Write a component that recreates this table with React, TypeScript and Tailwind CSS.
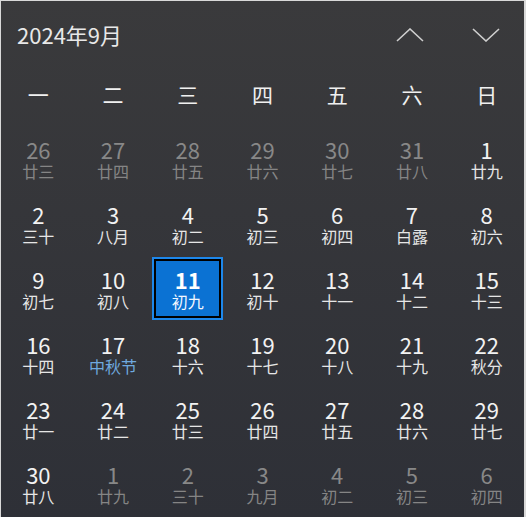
import React from 'react';

type Day = { n: number; lunar: string; other?: boolean; festival?: boolean };

const weekdays = ['一', '二', '三', '四', '五', '六', '日'];

const rows: Day[][] = [
  [
    { n: 26, lunar: '廿三', other: true },
    { n: 27, lunar: '廿四', other: true },
    { n: 28, lunar: '廿五', other: true },
    { n: 29, lunar: '廿六', other: true },
    { n: 30, lunar: '廿七', other: true },
    { n: 31, lunar: '廿八', other: true },
    { n: 1, lunar: '廿九' },
  ],
  [
    { n: 2, lunar: '三十' },
    { n: 3, lunar: '八月' },
    { n: 4, lunar: '初二' },
    { n: 5, lunar: '初三' },
    { n: 6, lunar: '初四' },
    { n: 7, lunar: '白露' },
    { n: 8, lunar: '初六' },
  ],
  [
    { n: 9, lunar: '初七' },
    { n: 10, lunar: '初八' },
    { n: 11, lunar: '初九' },
    { n: 12, lunar: '初十' },
    { n: 13, lunar: '十一' },
    { n: 14, lunar: '十二' },
    { n: 15, lunar: '十三' },
  ],
  [
    { n: 16, lunar: '十四' },
    { n: 17, lunar: '中秋节', festival: true },
    { n: 18, lunar: '十六' },
    { n: 19, lunar: '十七' },
    { n: 20, lunar: '十八' },
    { n: 21, lunar: '十九' },
    { n: 22, lunar: '秋分' },
  ],
  [
    { n: 23, lunar: '廿一' },
    { n: 24, lunar: '廿二' },
    { n: 25, lunar: '廿三' },
    { n: 26, lunar: '廿四' },
    { n: 27, lunar: '廿五' },
    { n: 28, lunar: '廿六' },
    { n: 29, lunar: '廿七' },
  ],
  [
    { n: 30, lunar: '廿八' },
    { n: 1, lunar: '廿九', other: true },
    { n: 2, lunar: '三十', other: true },
    { n: 3, lunar: '九月', other: true },
    { n: 4, lunar: '初二', other: true },
    { n: 5, lunar: '初三', other: true },
    { n: 6, lunar: '初四', other: true },
  ],
];

const Chevron = ({ up }: { up?: boolean }) => (
  <svg width="28" height="14" viewBox="0 0 28 14" fill="none">
    <path
      d={up ? 'M1 13 L14 1 L27 13' : 'M1 1 L14 13 L27 1'}
      stroke="#cfcfcf"
      strokeWidth="1.6"
    />
  </svg>
);

const DayCell = ({ day }: { day: Day }) => {
  const selected = !day.other && day.n === 11;
  const numColor = day.other ? 'text-[#888888]' : 'text-[#f2f2f2]';
  const lunarColor = day.festival
    ? 'text-[#6fa9df]'
    : day.other
      ? 'text-[#858585]'
      : 'text-[#e6e6e6]';

  if (selected) {
    return (
      <div className="flex h-[65px] items-center justify-center">
        <div className="h-[63px] w-[71px] border-2 border-[#1d87ea] bg-black p-[2px]">
          <div className="flex h-full w-full flex-col items-center justify-center gap-[3px] bg-[#0b72d3] pt-[1px]">
            <span className="text-[22px] leading-[22px] font-semibold text-white">{day.n}</span>
            <span className="text-[16px] leading-[17px] text-[#f4f8ff]">{day.lunar}</span>
          </div>
        </div>
      </div>
    );
  }

  return (
    <div className="flex h-[65px] flex-col items-center justify-center gap-[3px] pt-[1px]">
      <span className={`text-[22px] leading-[22px] ${numColor}`}>{day.n}</span>
      <span className={`text-[16px] leading-[17px] ${lunarColor}`}>{day.lunar}</span>
    </div>
  );
};

export default function App() {
  return (
    <div
      className="h-[517px] w-[526px] overflow-hidden border-t border-r-2 border-l border-[#d9d9d9] bg-gradient-to-b from-[#3a3a3c] to-[#2e3037]"
      style={{ fontFamily: '"Noto Sans CJK SC", "Noto Sans", sans-serif' }}
    >
      <div className="flex h-[63px] items-center justify-between pt-[4px] pl-[16px] pr-[24px]">
        <span className="text-[22px] text-[#e8e8e8]">2024年9月</span>
        <div className="flex items-center gap-[48px]">
          <Chevron up />
          <Chevron />
        </div>
      </div>

      <div className="grid h-[62px] grid-cols-7 items-center">
        {weekdays.map((w) => (
          <span key={w} className="text-center text-[21px] text-[#f0f0f0]">
            {w}
          </span>
        ))}
      </div>

      {rows.map((row, i) => (
        <div key={i} className="grid grid-cols-7">
          {row.map((d, j) => (
            <DayCell key={j} day={d} />
          ))}
        </div>
      ))}
    </div>
  );
}
